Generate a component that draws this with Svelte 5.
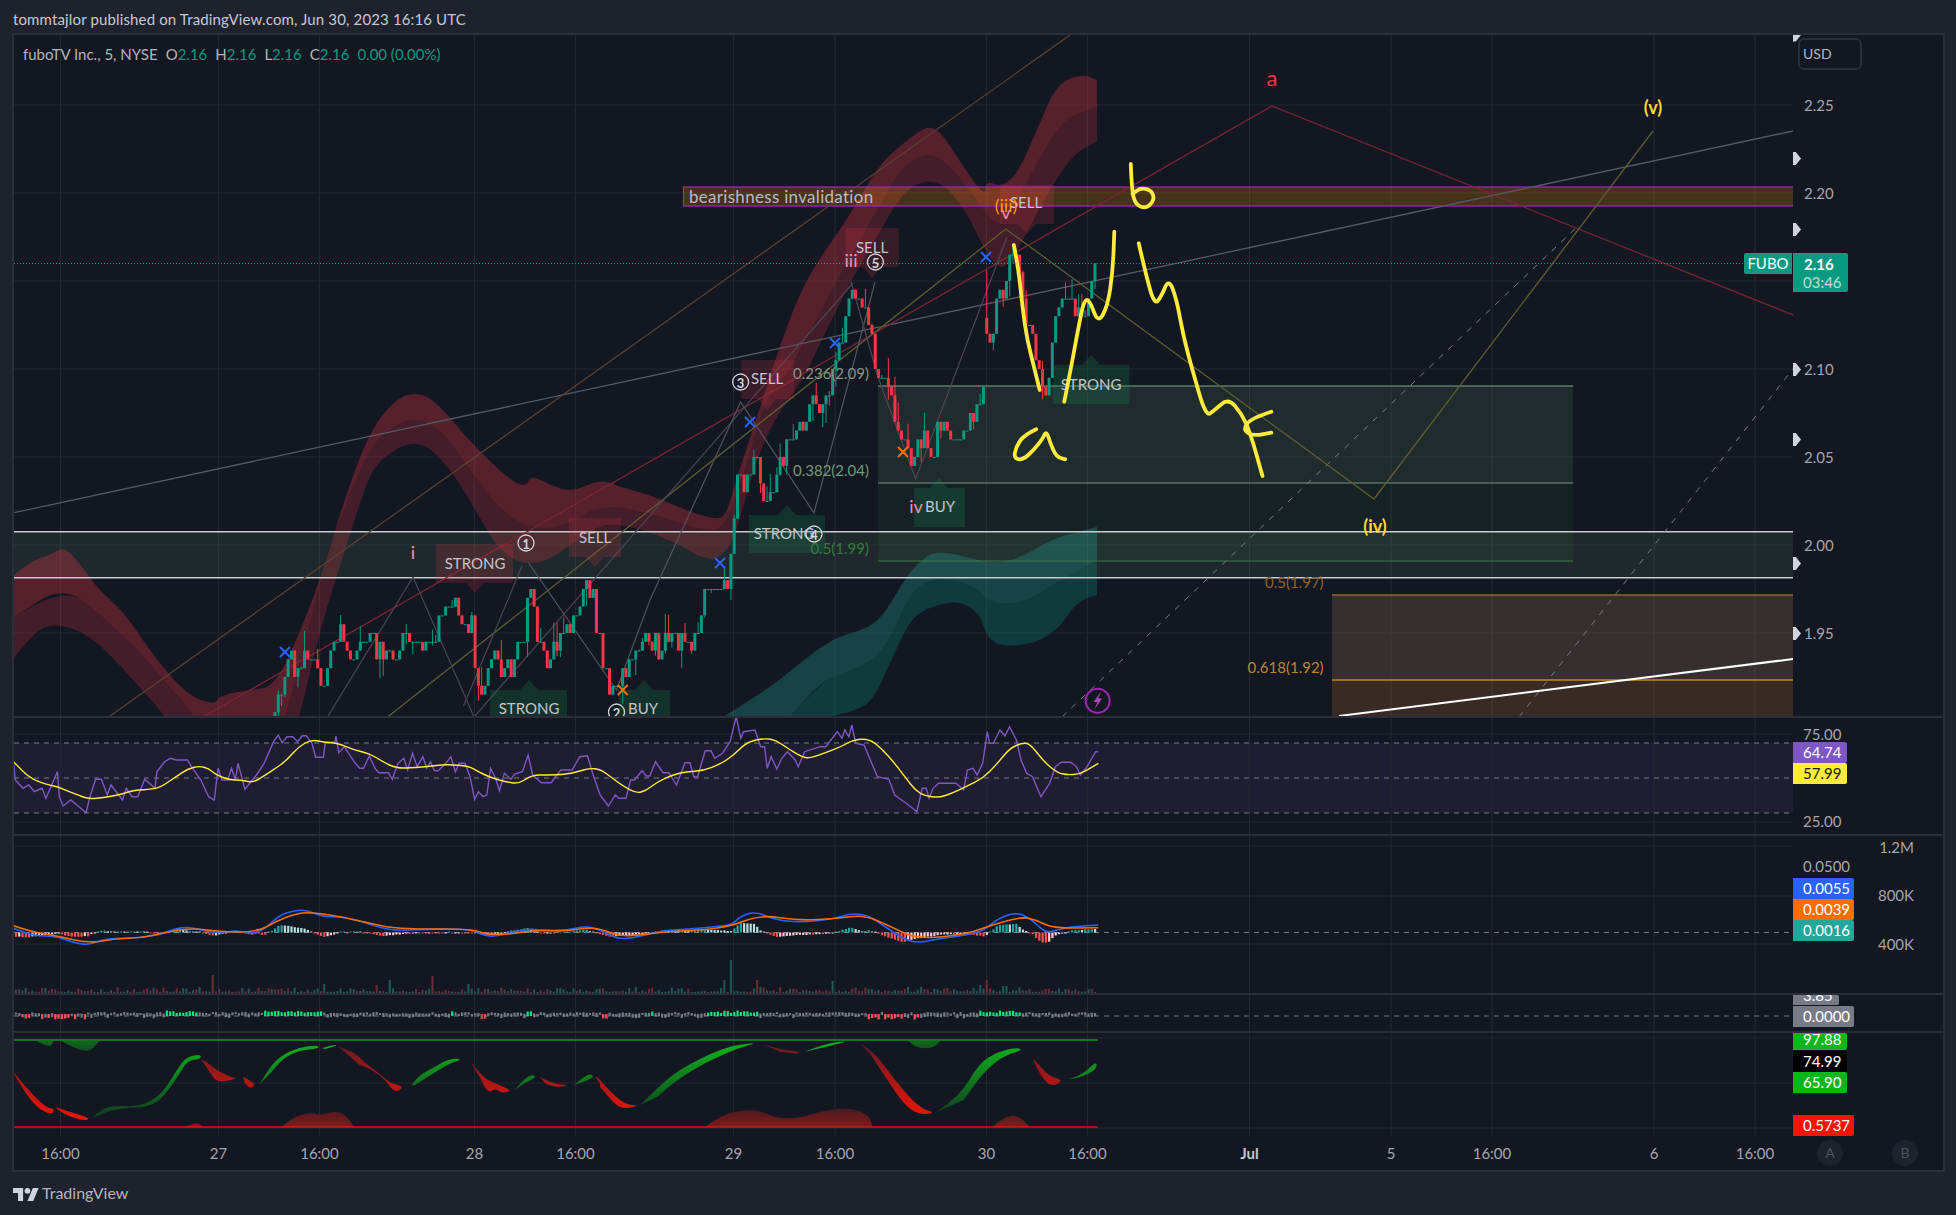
<script lang="ts">
	type Pt = [number, number];

	// Readings were taken from enlarged crops, so they come with an origin and an x scale.
	const crop = (ox: number, oy: number, sx: number, list: number[][]): Pt[] =>
		list.map(([x, y]) => [ox + x / sx, oy + y / 3] as Pt);
	const lower1 = (list: number[][]) => crop(0, 700, 2.613, list);
	const lower2 = (list: number[][]) => crop(600, 700, 2.613, list);
	const upper = (list: number[][]) => crop(650, 150, 2.24, list);

	const line = (pts: Pt[]) => 'M' + pts.map(([x, y]) => `${x.toFixed(1)} ${y.toFixed(1)}`).join('L');
	const smooth = (pts: Pt[]) => {
		let d = `M${pts[0][0].toFixed(1)} ${pts[0][1].toFixed(1)}`;
		for (let i = 1; i < pts.length - 1; i++) {
			const mx = (pts[i][0] + pts[i + 1][0]) / 2;
			const my = (pts[i][1] + pts[i + 1][1]) / 2;
			d += `Q${pts[i][0].toFixed(1)} ${pts[i][1].toFixed(1)} ${mx.toFixed(1)} ${my.toFixed(1)}`;
		}
		const last = pts[pts.length - 1];
		return d + `L${last[0].toFixed(1)} ${last[1].toFixed(1)}`;
	};
	const blob = (pts: Pt[]) => smooth(pts) + 'Z';
	const band = (a: Pt[], b: Pt[]) => smooth(a) + smooth([...b].reverse()).replace('M', 'L') + 'Z';
	const sample = (pts: Pt[], x: number) => {
		if (x <= pts[0][0]) return pts[0][1];
		for (let i = 1; i < pts.length; i++) {
			if (x <= pts[i][0]) {
				const t = (x - pts[i - 1][0]) / (pts[i][0] - pts[i - 1][0] || 1);
				return pts[i - 1][1] + (pts[i][1] - pts[i - 1][1]) * t;
			}
		}
		return pts[pts.length - 1][1];
	};

	let seed = 20230630;
	const rnd = () => {
		seed = (seed * 1664525 + 1013904223) % 4294967296;
		return seed / 4294967296;
	};

	const timeMarks = [
		{ x: 60.5, label: '16:00' },
		{ x: 218.5, label: '27' },
		{ x: 319.5, label: '16:00' },
		{ x: 474.5, label: '28' },
		{ x: 575.5, label: '16:00' },
		{ x: 733.5, label: '29' },
		{ x: 835, label: '16:00' },
		{ x: 986.5, label: '30' },
		{ x: 1087.5, label: '16:00' },
		{ x: 1249.5, label: 'Jul', strong: true },
		{ x: 1391, label: '5' },
		{ x: 1492, label: '16:00' },
		{ x: 1654, label: '6' },
		{ x: 1755, label: '16:00' }
	];

	// price cloud
	const redTop: Pt[] = [
		[14, 575], [29, 562], [50, 555], [62, 548], [70, 552], [87, 573], [99, 590], [124, 612], [155, 658],
		[187, 695], [215, 705], [220, 695], [250, 690], [274, 687], [300, 633], [327, 560], [344, 500], [369, 433],
		[394, 400], [415, 392], [435, 400], [473, 445], [510, 480], [526, 487], [531, 475], [550, 485], [572, 492],
		[601, 479], [620, 487], [650, 495], [686, 510], [700, 515], [720, 520], [728, 510], [735, 483], [757, 417],
		[773, 367], [783, 337], [800, 293], [817, 262], [847, 220], [877, 168], [897, 148], [922, 129], [932, 127],
		[943, 135], [957, 157], [985, 198], [986, 180], [1000, 187], [1017, 175], [1037, 130], [1057, 83], [1083, 74],
		[1097, 80]
	];
	const redMid: Pt[] = [
		[14, 617], [62, 586], [99, 613], [145, 657], [166, 683], [195, 715], [215, 760], [270, 760], [286, 717],
		[307, 633], [327, 557], [344, 510], [365, 457], [386, 430], [415, 417], [440, 428], [468, 467], [502, 513],
		[535, 530], [568, 525], [601, 504], [650, 513], [700, 530], [725, 530], [745, 470], [765, 400], [783, 380],
		[800, 350], [820, 313], [837, 280], [853, 253], [877, 210], [900, 170], [917, 157], [932, 154], [947, 163],
		[967, 187], [985, 213], [997, 225], [1007, 218], [1023, 190], [1040, 157], [1060, 125], [1080, 110], [1097, 108]
	];
	const redLow: Pt[] = [
		[14, 658], [37, 630], [54, 624], [79, 630], [104, 648], [145, 693], [166, 717], [195, 770], [280, 770], [300, 717],
		[319, 633], [344, 553], [361, 500], [373, 467], [398, 447], [415, 443], [431, 448], [456, 477], [477, 513],
		[497, 547], [518, 563], [543, 563], [568, 547], [597, 527], [614, 523], [650, 532], [680, 545], [700, 557],
		[717, 560], [733, 543], [745, 500], [760, 450], [780, 410], [803, 380], [817, 350], [833, 317], [850, 283],
		[873, 243], [900, 197], [917, 183], [932, 181], [947, 187], [967, 213], [983, 247], [997, 267], [1007, 267],
		[1023, 240], [1040, 207], [1060, 173], [1080, 148], [1097, 142]
	];
	const tealTop: Pt[] = [
		[723, 717], [767, 690], [800, 663], [833, 638], [870, 628], [887, 610], [907, 575], [927, 555], [940, 552],
		[960, 555], [987, 563], [1017, 560], [1050, 540], [1077, 532], [1097, 527]
	];
	const tealMid: Pt[] = [
		[790, 717], [820, 683], [843, 673], [870, 663], [890, 640], [907, 600], [923, 582], [947, 578], [977, 588],
		[987, 600], [1003, 605], [1030, 600], [1060, 580], [1097, 560]
	];
	const tealLow: Pt[] = [
		[830, 717], [857, 710], [873, 700], [890, 663], [910, 620], [927, 608], [957, 600], [980, 613], [987, 638],
		[1003, 647], [1037, 643], [1060, 627], [1073, 607], [1087, 597], [1097, 595]
	];

	// candles
	const closeKeys: Pt[] = [
		[274, 712], [282, 680], [290, 660], [297, 668], [305, 650], [312, 660], [320, 690], [327, 665], [335, 635],
		[344, 640], [350, 660], [360, 655], [373, 640], [385, 655], [394, 668], [405, 640], [415, 628], [425, 642],
		[435, 630], [446, 618], [456, 610], [465, 625], [473, 625], [477, 690], [483, 700], [493, 650], [502, 672],
		[512, 660], [520, 640], [526, 640], [529, 563], [532, 590], [536, 630], [547, 665], [555, 648], [565, 640],
		[576, 612], [585, 582], [593, 600], [601, 655], [609, 685], [618, 680], [630, 665], [640, 645], [650, 640],
		[660, 645], [675, 640], [690, 640], [700, 615], [707, 588], [718, 590], [728, 580], [733, 530], [737, 470],
		[744, 490], [755, 455], [766, 500], [779, 468], [788, 445], [804, 425], [813, 400], [822, 410], [829, 390],
		[835, 360], [844, 330], [851, 285], [855, 300], [866, 312], [871, 330], [875, 360], [878, 372], [887, 382],
		[895, 415], [902, 438], [913, 460], [922, 435], [931, 450], [940, 425], [954, 438], [967, 425], [978, 408],
		[983, 398], [986, 333], [992, 352], [997, 298], [1001, 290], [1004, 298], [1007, 272], [1011, 247], [1014, 272],
		[1018, 247], [1020, 283], [1023, 298], [1027, 333], [1032, 325], [1037, 367], [1041, 378], [1047, 405],
		[1054, 325], [1058, 307], [1061, 298], [1067, 298], [1070, 300], [1076, 317], [1080, 307], [1083, 325],
		[1087, 307], [1091, 290], [1095, 263]
	];
	const tick = 8.8;
	const snap = (y: number) => 193 + Math.round((y - 193) / tick) * tick;
	const STEP = 3.28;
	const bars: { x: number; open: number; close: number; high: number; low: number; up: boolean }[] = [];
	let prev = 720;
	for (let x = 1095 - Math.floor((1095 - 274) / STEP) * STEP; x <= 1096; x += STEP) {
		const spread = x > 980 ? 0 : x > 720 ? 16 : 24;
		let close = snap(sample(closeKeys, x) + (rnd() - 0.5) * spread);
		// thinly traded: plenty of bars print at the previous close
		if (Math.abs(close - prev) <= tick && rnd() < 0.4) close = prev;
		const open = x > 984 && x < 988 ? close - 16 : prev;
		const top = Math.min(open, close);
		const bottom = Math.max(open, close);
		const high = top - (rnd() < 0.2 ? rnd() * 20 : 0);
		const low = bottom + (rnd() < 0.2 ? rnd() * 20 : 0);
		bars.push({ x, open, close, high: x > 984 && x < 988 ? 270 : high, low, up: close <= open });
		prev = close;
	}

	const trendLines = [
		{ d: 'M14 512.7L1793 131', stroke: '#55585f', w: 1.3 },
		{ d: 'M108.6 717L1070 35', stroke: '#5c4233', w: 1.2 },
		{ d: 'M203 717L1272 106L1793 315', stroke: '#7a2534', w: 1.3 },
		{ d: 'M387.6 717L1005.8 229L1374 499L1653 131', stroke: '#5f5d30', w: 1.3 },
		{ d: 'M327.5 717L413 577L474 717L853 283', stroke: '#4c4653', w: 1.2 },
		{ d: 'M463.5 706L522 566', stroke: '#4c4653', w: 1.2 },
		{ d: 'M528.6 563L616.5 690L650 600L740.6 402L814 513L875 282', stroke: '#55535e', w: 1.2 },
		{ d: 'M851 282L878 377L915.6 479L1007 237', stroke: '#4c4653', w: 1.2 }
	];

	const signals = [
		{ kind: 'sell', x1: 436, x2: 513, top: 544, bottom: 583, tip: 593, cx: 475 },
		{ kind: 'sell', x1: 569, x2: 621, top: 518, bottom: 557, tip: 567, cx: 595 },
		{ kind: 'sell', x1: 741.5, x2: 794, top: 360, bottom: 399, tip: 410, cx: 767 },
		{ kind: 'sell', x1: 845.5, x2: 898.6, top: 228, bottom: 267, tip: 278, cx: 872 },
		{ kind: 'sell', x1: 1000, x2: 1054, top: 185, bottom: 224, tip: 234, cx: 1027 },
		{ kind: 'buy', x1: 490, x2: 567, top: 690, bottom: 730, tip: 680, cx: 529 },
		{ kind: 'buy', x1: 618.6, x2: 670, top: 690, bottom: 730, tip: 680, cx: 644 },
		{ kind: 'buy', x1: 749, x2: 825, top: 515, bottom: 553, tip: 505, cx: 787 },
		{ kind: 'buy', x1: 914, x2: 965, top: 488, bottom: 527, tip: 478, cx: 939 },
		{ kind: 'buy', x1: 1053, x2: 1129.5, top: 365, bottom: 404, tip: 355, cx: 1091 }
	];
	const signalPath = (s: (typeof signals)[number]) =>
		s.kind === 'sell'
			? `M${s.x1} ${s.top}H${s.x2}V${s.bottom}H${s.cx + 9}L${s.cx} ${s.tip}L${s.cx - 9} ${s.bottom}H${s.x1}Z`
			: `M${s.x1} ${s.top}H${s.cx - 9}L${s.cx} ${s.tip}L${s.cx + 9} ${s.top}H${s.x2}V${s.bottom}H${s.x1}Z`;

	const chartLabels = [
		{ x: 475, y: 563, t: 'STRONG' },
		{ x: 595, y: 537, t: 'SELL' },
		{ x: 529, y: 708, t: 'STRONG' },
		{ x: 643, y: 708, t: 'BUY' },
		{ x: 767, y: 378, t: 'SELL' },
		{ x: 784, y: 533, t: 'STRONG' },
		{ x: 872, y: 247, t: 'SELL' },
		{ x: 1026, y: 202, t: 'SELL' },
		{ x: 940, y: 506, t: 'BUY' },
		{ x: 1091, y: 384, t: 'STRONG' }
	];
	const circled = [
		{ x: 526, y: 543, n: 1 },
		{ x: 616.5, y: 712, n: 2 },
		{ x: 740.6, y: 382, n: 3 },
		{ x: 814, y: 534, n: 4 },
		{ x: 875.4, y: 262, n: 5 }
	];
	const pinkLabels = [
		{ x: 413, y: 552, t: 'i' },
		{ x: 851, y: 260, t: 'iii' },
		{ x: 916, y: 506, t: 'iv' },
		{ x: 1006, y: 212, t: 'v' }
	];
	const fibLabels = [
		{ x: 869, y: 373, t: '0.236(2.09)', c: '#8a9384' },
		{ x: 869, y: 470, t: '0.382(2.04)', c: '#6f9a76' },
		{ x: 869, y: 548, t: '0.5(1.99)', c: '#357a3c' },
		{ x: 1323.6, y: 582, t: '0.5(1.97)', c: '#90642c' },
		{ x: 1323.6, y: 667, t: '0.618(1.92)', c: '#bd8530' }
	];
	const crosses = [
		{ x: 285, y: 652, c: '#2962ff' },
		{ x: 622.7, y: 690, c: '#ff6d00' },
		{ x: 720, y: 563, c: '#2962ff' },
		{ x: 750, y: 422, c: '#2962ff' },
		{ x: 835, y: 343, c: '#2962ff' },
		{ x: 986, y: 257, c: '#2962ff' },
		{ x: 903, y: 452, c: '#ff6d00' }
	];

	// hand drawn marker strokes
	const marker = [
		[[815, 285], [825, 350], [835, 480], [845, 570], [860, 650], [873, 720]],
		[[928, 755], [945, 640], [960, 530], [972, 450], [985, 450], [1003, 520], [1025, 470], [1037, 360], [1040, 245]],
		[
			[1095, 280], [1110, 370], [1130, 465], [1145, 440], [1162, 385], [1180, 450], [1195, 560], [1215, 660],
			[1245, 800], [1265, 780], [1295, 745], [1325, 790], [1345, 850], [1372, 978]
		],
		[[1392, 785], [1345, 805], [1328, 840], [1350, 858], [1392, 848]],
		[[865, 838], [838, 855], [820, 890], [815, 925], [835, 930], [860, 900], [880, 865], [888, 842], [897, 880], [910, 920], [930, 928]],
		[[1077, 42], [1079, 120], [1088, 165], [1112, 176], [1130, 150], [1124, 122], [1100, 113], [1081, 132]]
	].map((s) => smooth(upper(s)));

	// RSI
	const rsi = line([
		...lower1([
			[35, 185], [40, 240], [60, 265], [75, 255], [90, 275], [110, 265], [120, 295], [150, 215], [155, 290],
			[165, 318], [185, 300], [225, 338], [235, 290], [250, 238], [265, 238], [280, 285], [290, 255], [320, 300],
			[330, 265], [345, 290], [360, 290], [378, 238], [405, 265], [410, 215], [430, 185], [445, 175], [460, 180],
			[490, 180], [500, 200], [525, 240], [545, 290], [560, 300], [570, 205], [580, 240], [595, 240], [605, 205],
			[615, 240], [622, 190], [640, 268], [670, 225], [690, 190], [715, 125], [727, 105], [737, 128], [750, 110],
			[765, 110], [778, 125], [790, 107], [800, 107], [815, 130], [825, 172], [845, 172], [850, 127], [875, 127],
			[878, 108], [885, 158], [900, 140], [925, 185], [940, 205], [950, 205], [965, 168], [980, 205], [990, 218],
			[1015, 218], [1025, 238], [1040, 190], [1055, 175], [1065, 210], [1078, 160], [1090, 200], [1105, 170],
			[1115, 205], [1125, 185], [1135, 212], [1145, 212], [1165, 190], [1178, 170], [1190, 215], [1200, 190],
			[1215, 190], [1228, 230], [1240, 298], [1250, 275], [1262, 290], [1272, 285], [1282, 205], [1295, 235],
			[1305, 272], [1318, 220], [1335, 238], [1345, 222], [1365, 215], [1380, 165], [1392, 225], [1415, 248],
			[1440, 248], [1465, 210], [1495, 210], [1515, 170], [1535, 167], [1550, 225], [1568, 285]
		]),
		...lower2([
			[22, 318], [40, 285], [50, 295], [68, 295], [80, 240], [90, 240], [110, 212], [120, 228], [130, 228],
			[145, 185], [165, 218], [180, 218], [200, 255], [222, 188], [235, 188], [245, 230], [255, 230], [275, 152],
			[290, 152], [300, 175], [320, 160], [340, 125], [356, 50], [368, 115], [375, 95], [405, 90], [420, 140],
			[430, 140], [437, 205], [447, 170], [462, 207], [475, 175], [490, 155], [510, 180], [518, 200], [535, 155],
			[575, 140], [590, 140], [600, 125], [620, 95], [632, 115], [640, 90], [650, 110], [658, 75], [668, 130],
			[690, 135], [710, 190], [725, 230], [755, 238], [770, 285], [800, 310], [828, 335], [842, 265], [852, 265],
			[860, 295], [870, 265], [885, 250], [930, 250], [950, 270], [960, 210], [975, 205], [985, 225], [1000, 190],
			[1012, 95], [1018, 130], [1028, 130], [1045, 90], [1058, 108], [1070, 80], [1088, 120], [1100, 180],
			[1115, 220], [1130, 230], [1152, 290], [1175, 250], [1190, 200], [1205, 187], [1230, 187], [1245, 200],
			[1255, 225], [1270, 205], [1295, 155], [1302, 155]
		])
	]);
	const rsiMa = smooth([
		...lower1([
			[35, 185], [60, 215], [85, 238], [125, 255], [150, 260], [180, 275], [205, 285], [230, 297], [275, 292],
			[320, 282], [350, 270], [400, 268], [425, 258], [460, 230], [490, 207], [520, 198], [545, 205], [565, 225],
			[600, 240], [630, 240], [660, 248], [690, 228], [720, 205], [750, 180], [780, 140], [815, 118], [850, 128],
			[880, 128], [925, 150], [965, 160], [1000, 185], [1035, 205], [1085, 203], [1135, 197], [1170, 193],
			[1225, 198], [1250, 215], [1280, 232], [1320, 245], [1355, 252], [1390, 225], [1430, 225], [1480, 223],
			[1510, 215], [1540, 205], [1568, 207]
		]),
		...lower2([
			[30, 232], [60, 258], [95, 280], [120, 272], [150, 245], [190, 225], [225, 215], [270, 212], [315, 192],
			[350, 165], [385, 125], [430, 115], [460, 120], [490, 145], [530, 172], [550, 174], [590, 158], [630, 140],
			[665, 118], [705, 118], [735, 145], [770, 190], [800, 235], [825, 272], [850, 288], [885, 293], [920, 280],
			[960, 258], [1000, 235], [1035, 195], [1070, 145], [1105, 128], [1125, 133], [1160, 185], [1195, 218],
			[1220, 225], [1255, 222], [1280, 205], [1302, 190]
		])
	]);

	// MACD and volume
	const macdPts: Pt[] = [
		...lower1([
			[35, 685], [75, 703], [115, 708], [150, 710], [190, 727], [230, 736], [270, 718], [310, 715], [370, 713],
			[420, 703], [470, 681], [510, 684], [560, 700], [620, 692], [655, 702], [690, 690], [730, 645], [770, 631],
			[800, 630], [845, 651], [890, 650], [940, 662], [1000, 685], [1040, 692], [1100, 688], [1230, 686],
			[1270, 710], [1310, 706], [1380, 685], [1420, 692], [1480, 692], [1530, 678], [1568, 690]
		]),
		...lower2([
			[30, 708], [60, 718], [110, 708], [170, 690], [230, 688], [300, 680], [345, 675], [365, 650], [405, 634],
			[460, 660], [525, 667], [610, 657], [655, 640], [700, 645], [745, 680], [790, 715], [830, 730], [890, 715],
			[960, 705], [1005, 690], [1040, 655], [1090, 636], [1130, 660], [1165, 700], [1200, 688], [1235, 680],
			[1302, 675]
		])
	];
	const signalPts: Pt[] = [
		...lower1([
			[35, 677], [80, 695], [150, 708], [235, 730], [300, 716], [370, 714], [430, 698], [500, 684], [570, 695],
			[670, 697], [720, 665], [770, 642], [810, 636], [890, 650], [960, 668], [1040, 688], [1230, 686], [1270, 703],
			[1330, 703], [1400, 690], [1480, 693], [1530, 684], [1568, 686]
		]),
		...lower2([
			[60, 712], [170, 695], [270, 690], [345, 678], [420, 644], [520, 662], [620, 655], [690, 645], [760, 680],
			[830, 718], [960, 702], [1010, 680], [1100, 650], [1140, 660], [1185, 685], [1302, 683]
		])
	];
	const spikes: [number, number, boolean][] = [
		[213, 18, false], [324, 9, true], [376, 8, false], [389, 13, true], [432, 17, false], [470, 9, true],
		[726, 13, true], [730, 33, true], [757, 13, false], [834, 12, true], [979, 8, true], [986, 13, false],
		[1003, 7, true], [1008, 7, true]
	];
	const baseX: number[] = [];
	for (let x = 1095; x > 14; x -= STEP) baseX.unshift(x);

	const macdBars = baseX.map((x) => {
		const diff = (sample(signalPts, x) - sample(macdPts, x)) * 1.5 + (rnd() - 0.5) * 0.6;
		const before = (sample(signalPts, x - STEP) - sample(macdPts, x - STEP)) * 1.5;
		const c = diff >= 0 ? (diff >= before ? '#26a69a' : '#b2dfdb') : diff <= before ? '#ff5252' : '#ffcdd2';
		const h = Math.min(10, Math.max(1, Math.abs(diff)));
		return { x, y: diff >= 0 ? 932.5 - h : 932.5, h, c };
	});
	const volBars = baseX.map((x) => {
		const hit = spikes.find(([sx]) => Math.abs(sx - x) < STEP / 2);
		const up = hit ? hit[2] : rnd() > 0.45;
		const h = hit ? hit[1] : 1 + rnd() * rnd() * 6;
		return { x, h, c: up ? '#1f5a57' : '#6f2c36' };
	});
	const greenZones = [[165, 199], [264, 323], [450, 455], [527, 532], [650, 655], [705, 759], [979, 1021]];
	const redZones = [[14, 86], [475, 488], [600, 615], [868, 921]];
	const oscBars = baseX.map((x) => {
		const inZone = (z: number[][]) => z.some(([a, b]) => x >= a && x <= b);
		const h = 2 + rnd() * 2.5;
		if (inZone(greenZones)) return { x, y: 1016 - h - 1, h: h + 1, c: '#00e676' };
		if (inZone(redZones) && rnd() < 0.55) return { x, y: 1014, h: h + 1, c: '#ff5252' };
		return { x, y: 1014 - rnd() * 2, h, c: '#787b86' };
	});

	// wave trend ribbon
	const reds = [
		lower1([[35, 1115], [60, 1150], [90, 1190], [125, 1225], [140, 1225], [140, 1240], [125, 1240], [100, 1225], [70, 1185], [35, 1120]]),
		lower1([[145, 1222], [180, 1235], [235, 1253], [225, 1263], [180, 1250], [150, 1228]]),
		lower1([[525, 1077], [540, 1085], [565, 1110], [600, 1130], [620, 1135], [600, 1142], [565, 1145], [550, 1120]]),
		lower1([[635, 1130], [670, 1150], [655, 1167], [640, 1150]]),
		lower1([[885, 1040], [925, 1055], [950, 1085], [985, 1115], [1020, 1150], [1055, 1158], [1040, 1175], [1025, 1170], [1000, 1130], [960, 1103], [940, 1095]]),
		lower1([[1230, 1085], [1260, 1130], [1290, 1148], [1340, 1172], [1310, 1180], [1295, 1165], [1275, 1180], [1255, 1135]]),
		lower1([[1410, 1130], [1440, 1150], [1490, 1157], [1450, 1162], [1425, 1150]]),
		lower1([[1555, 1130], [1568, 1135], [1568, 1150]]),
		lower2([[0, 1140], [30, 1180], [70, 1215], [105, 1215], [65, 1227], [40, 1215], [0, 1160]]),
		lower2([[430, 1035], [480, 1050], [525, 1055], [515, 1062], [470, 1055]]),
		lower2([[680, 1030], [720, 1060], [770, 1140], [835, 1225], [878, 1238], [835, 1245], [795, 1215], [745, 1130], [705, 1060]]),
		lower2([[1108, 1050], [1140, 1085], [1175, 1130], [1212, 1140], [1180, 1162], [1150, 1125], [1130, 1075]])
	];
	const greens = [
		lower1([[240, 1255], [265, 1225], [310, 1217], [360, 1220], [400, 1200], [430, 1170], [470, 1095], [490, 1070], [525, 1063], [525, 1077], [490, 1082], [470, 1120], [440, 1170], [415, 1205], [370, 1225], [330, 1222], [280, 1235]]),
		lower1([[678, 1153], [700, 1110], [730, 1070], [780, 1042], [830, 1035], [835, 1045], [780, 1052], [740, 1075], [710, 1115]]),
		lower1([[840, 1045], [878, 1033], [878, 1038], [850, 1047]]),
		lower1([[1075, 1155], [1095, 1125], [1130, 1105], [1175, 1075], [1210, 1078], [1175, 1090], [1125, 1125], [1085, 1155]]),
		lower1([[1345, 1170], [1380, 1122], [1405, 1130], [1370, 1150]]),
		lower1([[1500, 1155], [1535, 1118], [1555, 1130], [1530, 1143]]),
		lower2([[105, 1215], [145, 1170], [185, 1128], [230, 1095], [290, 1060], [350, 1035], [415, 1027], [360, 1045], [300, 1075], [250, 1105], [195, 1145], [150, 1190]]),
		lower2([[535, 1055], [590, 1030], [655, 1022], [600, 1038]]),
		lower2([[880, 1235], [940, 1190], [990, 1090], [1040, 1055], [1090, 1042], [1105, 1050], [1050, 1070], [1000, 1120], [950, 1200]]),
		lower2([[1215, 1140], [1255, 1130], [1298, 1082], [1298, 1108], [1260, 1132], [1225, 1137]])
	];
	const overbought = [
		lower1([[95, 1022], [130, 1045], [140, 1022]]),
		lower1([[160, 1022], [225, 1067], [260, 1022]]),
		lower2([[805, 1022], [825, 1045], [870, 1045], [890, 1022]])
	];
	const oversold = [
		lower1([[480, 1282], [515, 1265], [530, 1282]]),
		lower1([[735, 1282], [760, 1255], [810, 1237], [840, 1245], [875, 1233], [905, 1245], [925, 1282]]),
		lower2([[275, 1282], [320, 1240], [400, 1228], [435, 1240], [460, 1255], [520, 1255], [560, 1240], [620, 1225], [670, 1228], [705, 1250], [712, 1282]]),
		lower2([[1025, 1282], [1050, 1255], [1090, 1243], [1125, 1282]])
	];

	const flags = [34.5, 158, 229, 369, 439, 563, 633];
	const priceTicks = [
		{ y: 105, t: '2.25' },
		{ y: 193, t: '2.20' },
		{ y: 369, t: '2.10' },
		{ y: 457, t: '2.05' },
		{ y: 545, t: '2.00' },
		{ y: 633, t: '1.95' }
	];
</script>

{#snippet hgrid(ys: number[])}
	{#each ys as y}
		<line class="grid" x1="14" x2="1793" y1={y} y2={y} />
	{/each}
{/snippet}

{#snippet vgrid(y1: number, y2: number)}
	{#each timeMarks as m}
		<line class="grid" x1={m.x} x2={m.x} {y1} {y2} />
	{/each}
{/snippet}

{#snippet dashed(y: number)}
	<line class="dash" x1="14" x2="1793" y1={y} y2={y} />
{/snippet}

<div class="page">
	<header class="published">tommtajlor published on TradingView.com, Jun 30, 2023 16:16 UTC</header>

	<section class="chart">
		<div class="pane main">
			<svg class="plot" width="1779" height="681" viewBox="14 35 1779 681">
				{@render vgrid(35, 716)}
				{@render hgrid([105, 193, 281, 369, 457, 545, 633])}

				<rect class="zone" x="14" y="532" width="1779" height="46" />
				<rect class="fib-a" x="878" y="386" width="695" height="97" />
				<rect class="fib-b" x="878" y="483" width="695" height="78" />

				<path d={band(redTop, redMid)} fill="rgba(242,54,69,.3)" />
				<path d={band(redMid, redLow)} fill="rgba(242,54,69,.22)" />
				<path d={band(tealTop, tealMid)} fill="rgba(38,166,154,.3)" />
				<path d={band(tealMid, tealLow)} fill="rgba(8,153,129,.28)" />

				<line class="white" x1="14" x2="1793" y1="531.7" y2="531.7" />
				<line class="white" x1="14" x2="1793" y1="577.7" y2="577.7" />
				<line class="fib-line bright" x1="878" x2="1573" y1="386" y2="386" />
				<line class="fib-line" x1="878" x2="1573" y1="483" y2="483" />
				<line class="fib-line dim" x1="878" x2="1573" y1="561" y2="561" />

				<rect class="box-top" x="1332" y="595" width="461" height="85" />
				<rect class="box-low" x="1332" y="680" width="461" height="40" />
				<line class="box-edge" x1="1332" x2="1793" y1="595" y2="595" />
				<line class="box-mid" x1="1332" x2="1793" y1="680" y2="680" />

				<rect class="invalid" x="683.5" y="187" width="1112" height="19" />

				<line class="drift" x1="1062" y1="717" x2="1578" y2="226" />
				<line class="drift" x1="1519" y1="717" x2="1796" y2="365" />
				<line class="ray" x1="1339" y1="716" x2="1793" y2="659" />

				{#each trendLines as t}
					<path d={t.d} fill="none" stroke={t.stroke} stroke-width={t.w} />
				{/each}

				<line class="last-price" x1="14" x2="1744" y1="263.5" y2="263.5" />

				{#each bars as b}
					<line x1={b.x} x2={b.x} y1={b.high} y2={b.low} class:up={b.up} class="wick" />
					<rect
						x={b.x - 1.5}
						y={Math.min(b.open, b.close)}
						width="3"
						height={Math.max(1, Math.abs(b.close - b.open))}
						class:up={b.up}
						class="body"
					/>
				{/each}

				{#each signals as s}
					<path d={signalPath(s)} class={s.kind} />
				{/each}

				{#each crosses as c}
					<path
						d={`M${c.x - 5} ${c.y - 5}L${c.x + 5} ${c.y + 5}M${c.x + 5} ${c.y - 5}L${c.x - 5} ${c.y + 5}`}
						stroke={c.c}
						stroke-width="2"
					/>
				{/each}

				{#each fibLabels as f}
					<text class="fib-text" x={f.x} y={f.y} fill={f.c}>{f.t}</text>
				{/each}

				<text class="tag large" x="689" y="196">bearishness invalidation</text>
				{#each chartLabels as l}
					<text class="tag mid" x={l.x} y={l.y}>{l.t}</text>
				{/each}
				{#each circled as c}
					<circle class="ring" cx={c.x} cy={c.y} r="8" />
					<text class="ring-text" x={c.x} y={c.y + 0.5}>{c.n}</text>
				{/each}
				{#each pinkLabels as p}
					<text class="pink" x={p.x} y={p.y}>{p.t}</text>
				{/each}

				<text class="wave orange" x="1006" y="205">(iii)</text>
				<text class="wave red" x="1272" y="77">a</text>
				<text class="wave yellow" x="1653" y="107">(v)</text>
				<text class="wave yellow" x="1375" y="526">(iv)</text>

				<circle class="bolt-ring" cx="1097.6" cy="700.7" r="12" />
				<path class="bolt" d="M1101 691.5L1093.5 702H1097.5L1094 710L1102 698.5H1098Z" />

				{#each marker as d}
					<path class="marker" {d} />
				{/each}
			</svg>
			<div class="axis">
				<div class="currency">USD</div>
				{#each flags as y}
					<span class="flag" style="top:{y - 41}px"></span>
				{/each}
				{#each priceTicks as p}
					<span class="tick price" style="top:{p.y - 35}px">{p.t}</span>
				{/each}
				<div class="last-badge">
					<strong>2.16</strong>
					<span>03:46</span>
				</div>
			</div>
			<div class="symbol-tag">FUBO</div>
			<div class="legend">
				<span>fuboTV Inc., 5, NYSE</span>
				<span>O<b>2.16</b></span>
				<span>H<b>2.16</b></span>
				<span>L<b>2.16</b></span>
				<span>C<b>2.16</b></span>
				<b>0.00 (0.00%)</b>
			</div>
		</div>

		<div class="pane rsi">
			<svg class="plot" width="1779" height="116" viewBox="14 718 1779 116">
				<rect class="rsi-fill" x="14" y="743" width="1779" height="70" />
				{@render vgrid(718, 834)}
				{@render hgrid([734, 822])}
				{@render dashed(743)}
				{@render dashed(778)}
				{@render dashed(813)}
				<path class="rsi-line" d={rsi} />
				<path class="rsi-ma" d={rsiMa} />
			</svg>
			<div class="axis">
				<span class="tick" style="top:16px">75.00</span>
				<span class="badge purple" style="top:24px">64.74</span>
				<span class="badge yellow" style="top:45px">57.99</span>
				<span class="tick" style="top:103px">25.00</span>
			</div>
		</div>

		<div class="pane macd">
			<svg class="plot" width="1779" height="157" viewBox="14 836 1779 157">
				{@render vgrid(836, 993)}
				{@render hgrid([846, 896, 944])}
				{@render dashed(932.5)}
				{#each volBars as v}
					<rect x={v.x - 1} y={993 - v.h} width="2" height={v.h} fill={v.c} />
				{/each}
				{#each macdBars as m}
					<rect x={m.x - 1} y={m.y} width="2.2" height={m.h} fill={m.c} />
				{/each}
				<path class="macd-line" d={smooth(macdPts)} />
				<path class="signal-line" d={smooth(signalPts)} />
			</svg>
			<div class="axis">
				<span class="tick" style="top:30px">0.0500</span>
				<span class="badge wide blue" style="top:42px">0.0055</span>
				<span class="badge wide orange" style="top:63px">0.0039</span>
				<span class="badge wide teal" style="top:84px">0.0016</span>
				<span class="vol" style="top:11px">1.2M</span>
				<span class="vol" style="top:59px">800K</span>
				<span class="vol" style="top:108px">400K</span>
			</div>
		</div>

		<div class="pane osc">
			<svg class="plot" width="1779" height="36" viewBox="14 995 1779 36">
				{@render vgrid(995, 1031)}
				{@render dashed(1016)}
				{#each oscBars as o}
					<rect x={o.x - 1} y={o.y} width="2.2" height={o.h} fill={o.c} />
				{/each}
			</svg>
			<div class="axis">
				<span class="badge grey cut">3.85</span>
				<span class="badge wide grey" style="top:11px">0.0000</span>
			</div>
		</div>

		<div class="pane wave-pane">
			<svg class="plot" width="1779" height="103" viewBox="14 1033 1779 103">
				<defs>
					<linearGradient id="redRibbon" gradientUnits="userSpaceOnUse" x1="0" x2="0" y1="1040" y2="1115">
						<stop offset="0" stop-color="#5f1c22" />
						<stop offset="1" stop-color="#e8140a" />
					</linearGradient>
					<linearGradient id="greenRibbon" gradientUnits="userSpaceOnUse" x1="0" x2="0" y1="1050" y2="1115">
						<stop offset="0" stop-color="#10a81e" />
						<stop offset="1" stop-color="#10401e" />
					</linearGradient>
					<linearGradient id="obFade" gradientUnits="userSpaceOnUse" x1="0" x2="0" y1="1040" y2="1056">
						<stop offset="0" stop-color="#116a1e" />
						<stop offset="1" stop-color="#0f3f1e" />
					</linearGradient>
					<linearGradient id="osFade" gradientUnits="userSpaceOnUse" x1="0" x2="0" y1="1105" y2="1127">
						<stop offset="0" stop-color="#3d1a20" />
						<stop offset="1" stop-color="#821a1a" />
					</linearGradient>
				</defs>
				{@render vgrid(1033, 1136)}
				{@render hgrid([1038, 1083, 1128])}
				{#each overbought as p}
					<path d={blob(p)} fill="url(#obFade)" />
				{/each}
				{#each oversold as p}
					<path d={blob(p)} fill="url(#osFade)" />
				{/each}
				{#each reds as p}
					<path d={blob(p)} fill="url(#redRibbon)" />
				{/each}
				{#each greens as p}
					<path d={blob(p)} fill="url(#greenRibbon)" />
				{/each}
				<line class="top-band" x1="14" x2="1098" y1="1040" y2="1040" />
				<line class="low-band" x1="14" x2="1098" y1="1127" y2="1127" />
			</svg>
			<div class="axis">
				<span class="badge green first">97.88</span>
				<span class="badge black" style="top:18px">74.99</span>
				<span class="badge green" style="top:39px">65.90</span>
				<span class="badge wide red" style="top:82px">0.5737</span>
			</div>
		</div>

		<div class="timescale">
			{#each timeMarks as m}
				<span class="time" class:strong={m.strong} style="left:{m.x - 14}px">{m.label}</span>
			{/each}
			<span class="mode" style="left:1803px">A</span>
			<span class="mode" style="left:1878px">B</span>
		</div>
	</section>

	<footer class="brand">
		<svg width="26" height="16" viewBox="0 0 36 22" fill="#d1d4dc">
			<path d="M14 22H7V11H0V4h14v18zM28 22h-8l7.5-18h8L28 22z" />
			<circle cx="20" cy="8" r="4" />
		</svg>
		<span>TradingView</span>
	</footer>
</div>

<style>
	:global(body) {
		margin: 0;
		background: #1e222d;
	}

	.page {
		width: 1956px;
		height: 1215px;
		display: flex;
		flex-direction: column;
		background: #1e222d;
		font-family: 'Lato', 'Noto Sans', sans-serif;
		overflow: hidden;
	}

	.published {
		height: 33px;
		box-sizing: border-box;
		padding: 10px 0 0 13px;
		font-size: 15px;
		letter-spacing: 0.14px;
		line-height: 19px;
		color: #c5c8d0;
	}

	.chart {
		width: 1933px;
		height: 1139px;
		box-sizing: border-box;
		margin-left: 12px;
		border: 2px solid #2a2e39;
		background: #131722;
		display: flex;
		flex-direction: column;
	}

	.pane {
		position: relative;
		display: flex;
		border-bottom: 2px solid #2a2e39;
		overflow: hidden;
	}

	.wave-pane {
		border-bottom: 0;
	}

	.plot {
		display: block;
		flex: none;
	}

	.axis {
		position: relative;
		flex: none;
		width: 150px;
	}

	.grid {
		stroke: #23272f;
		stroke-width: 1.2;
	}

	.dash {
		stroke: #787b86;
		stroke-width: 1;
		stroke-dasharray: 5 5;
	}

	.zone {
		fill: rgba(120, 170, 130, 0.12);
	}

	.fib-a {
		fill: rgba(120, 180, 130, 0.13);
	}

	.fib-b {
		fill: rgba(76, 175, 80, 0.07);
	}

	.white {
		stroke: #c8cbd0;
		stroke-width: 1.5;
	}

	.fib-line {
		stroke: #6f9a76;
		stroke-width: 1.2;
	}

	.fib-line.bright {
		stroke: #7ea883;
	}

	.fib-line.dim {
		stroke: #3f7a47;
	}

	.box-top {
		fill: rgba(200, 140, 100, 0.2);
	}

	.box-low {
		fill: rgba(220, 140, 50, 0.18);
	}

	.box-edge {
		stroke: #8f6a2f;
		stroke-width: 1.3;
	}

	.box-mid {
		stroke: #c8891f;
		stroke-width: 1.3;
	}

	.invalid {
		fill: rgba(255, 152, 0, 0.22);
		stroke: #9c27b0;
		stroke-width: 1.3;
	}

	.drift {
		stroke: #787b86;
		stroke-width: 1;
		stroke-dasharray: 6 7;
	}

	.ray {
		stroke: #ffffff;
		stroke-width: 2;
	}

	.last-price {
		stroke: #089981;
		stroke-width: 1;
		stroke-dasharray: 1 2;
	}

	.wick {
		stroke: #f23645;
		stroke-width: 1;
	}

	.wick.up {
		stroke: #089981;
	}

	.body {
		fill: #f23645;
	}

	.body.up {
		fill: #089981;
	}

	.sell {
		fill: rgba(242, 54, 69, 0.17);
	}

	.buy {
		fill: rgba(20, 140, 80, 0.24);
	}

	text {
		dominant-baseline: central;
	}

	.tag {
		font-size: 15px;
		fill: #c3c5cb;
	}

	.tag.large {
		font-size: 17px;
		letter-spacing: 0.3px;
		fill: #b9bbc2;
	}

	.mid {
		text-anchor: middle;
	}

	.fib-text {
		font-size: 15px;
		text-anchor: end;
	}

	.ring {
		fill: none;
		stroke: #d1d4dc;
		stroke-width: 1.3;
	}

	.ring-text {
		font-size: 13px;
		font-weight: 700;
		fill: #d1d4dc;
		text-anchor: middle;
	}

	.pink {
		font-size: 18px;
		fill: #f48fb1;
		text-anchor: middle;
	}

	.wave {
		font-size: 18px;
		text-anchor: middle;
	}

	.wave.orange {
		fill: #ff9800;
	}

	.wave.red {
		fill: #f23645;
		font-size: 22px;
	}

	.wave.yellow {
		fill: #fdd835;
		font-weight: 700;
	}

	.bolt-ring {
		fill: none;
		stroke: #9c27b0;
		stroke-width: 2;
	}

	.bolt {
		fill: #ab47bc;
	}

	.marker {
		fill: none;
		stroke: #ffeb3b;
		stroke-width: 3.8;
		stroke-linecap: round;
		stroke-linejoin: round;
	}

	.rsi-fill {
		fill: rgba(126, 87, 194, 0.1);
	}

	.rsi-line {
		fill: none;
		stroke: #7e57c2;
		stroke-width: 1.4;
	}

	.rsi-ma {
		fill: none;
		stroke: #ffeb3b;
		stroke-width: 1.4;
	}

	.macd-line {
		fill: none;
		stroke: #2962ff;
		stroke-width: 1.6;
	}

	.signal-line {
		fill: none;
		stroke: #ff6d00;
		stroke-width: 1.6;
	}

	.top-band {
		stroke: #12751c;
		stroke-width: 2;
	}

	.low-band {
		stroke: #cc1a10;
		stroke-width: 1.6;
	}

	.legend {
		position: absolute;
		left: 9px;
		top: 10px;
		display: flex;
		gap: 8px;
		font-size: 15px;
		line-height: 19px;
		color: #b2b5be;
		white-space: nowrap;
	}

	.legend b {
		font-weight: 400;
		color: #089981;
	}

	.currency {
		position: absolute;
		left: 5px;
		top: 3px;
		width: 64px;
		height: 32px;
		box-sizing: border-box;
		border: 2px solid #2a2e39;
		border-radius: 6px;
		padding-left: 3px;
		font-size: 14px;
		line-height: 28px;
		color: #b2b5be;
	}

	.flag {
		position: absolute;
		left: 0;
		width: 8px;
		height: 13px;
		background: #d1d4dc;
		clip-path: polygon(0 0, 35% 0, 100% 50%, 35% 100%, 0 100%);
	}

	.tick {
		position: absolute;
		left: 10px;
		font-size: 15px;
		line-height: 18px;
		transform: translateY(-9px);
		color: #a3a6af;
	}

	.tick.price {
		left: 11px;
	}

	.vol {
		position: absolute;
		right: 29px;
		font-size: 15px;
		line-height: 18px;
		transform: translateY(-9px);
		color: #a3a6af;
	}

	.badge {
		position: absolute;
		left: 0;
		width: 54px;
		height: 21px;
		box-sizing: border-box;
		padding-left: 10px;
		border-radius: 0 2px 2px 0;
		font-size: 15px;
		line-height: 21px;
		color: #fff;
	}

	.badge.wide {
		width: 61px;
	}

	.badge.cut {
		width: 46px;
		height: 10px;
		line-height: 0;
		overflow: hidden;
		top: 0;
	}

	.badge.first {
		top: 0;
		height: 17px;
		line-height: 13px;
	}

	.purple {
		background: #7e57c2;
	}

	.yellow {
		background: #ffeb3b;
		color: #131722;
	}

	.blue {
		background: #2962ff;
	}

	.orange {
		background: #ff6d00;
	}

	.teal {
		background: #26a69a;
	}

	.grey {
		background: #787b86;
	}

	.green {
		background: #0cb51a;
	}

	.black {
		background: #000;
	}

	.red {
		background: #ff1100;
	}

	.symbol-tag {
		position: absolute;
		left: 1730px;
		top: 218px;
		width: 48px;
		height: 21px;
		border-radius: 2px 0 0 2px;
		background: #089981;
		color: #fff;
		font-size: 15px;
		line-height: 21px;
		text-align: center;
	}

	.last-badge {
		position: absolute;
		left: 0;
		top: 218px;
		width: 55px;
		height: 39px;
		box-sizing: border-box;
		padding: 2px 0 0 11px;
		border-radius: 0 2px 2px 0;
		background: #089981;
		display: flex;
		flex-direction: column;
		font-size: 15px;
		line-height: 18px;
	}

	.last-badge strong {
		font-weight: 700;
		color: #fff;
	}

	.last-badge span {
		color: #b5e0d8;
		margin-left: -1px;
	}

	.timescale {
		position: relative;
		flex: none;
		height: 34px;
	}

	.time {
		position: absolute;
		top: 8px;
		transform: translateX(-50%);
		font-size: 15px;
		line-height: 18px;
		color: #a3a6af;
	}

	.time.strong {
		font-weight: 700;
		color: #c5c8d0;
	}

	.mode {
		position: absolute;
		top: 4px;
		width: 26px;
		height: 26px;
		border-radius: 50%;
		background: #1e222d;
		color: #50535e;
		font-size: 14px;
		line-height: 26px;
		text-align: center;
	}

	.brand {
		flex: 1;
		display: flex;
		align-items: center;
		gap: 3px;
		padding: 0 0 2px 13px;
		font-size: 16px;
		color: #b2b5be;
	}
</style>
